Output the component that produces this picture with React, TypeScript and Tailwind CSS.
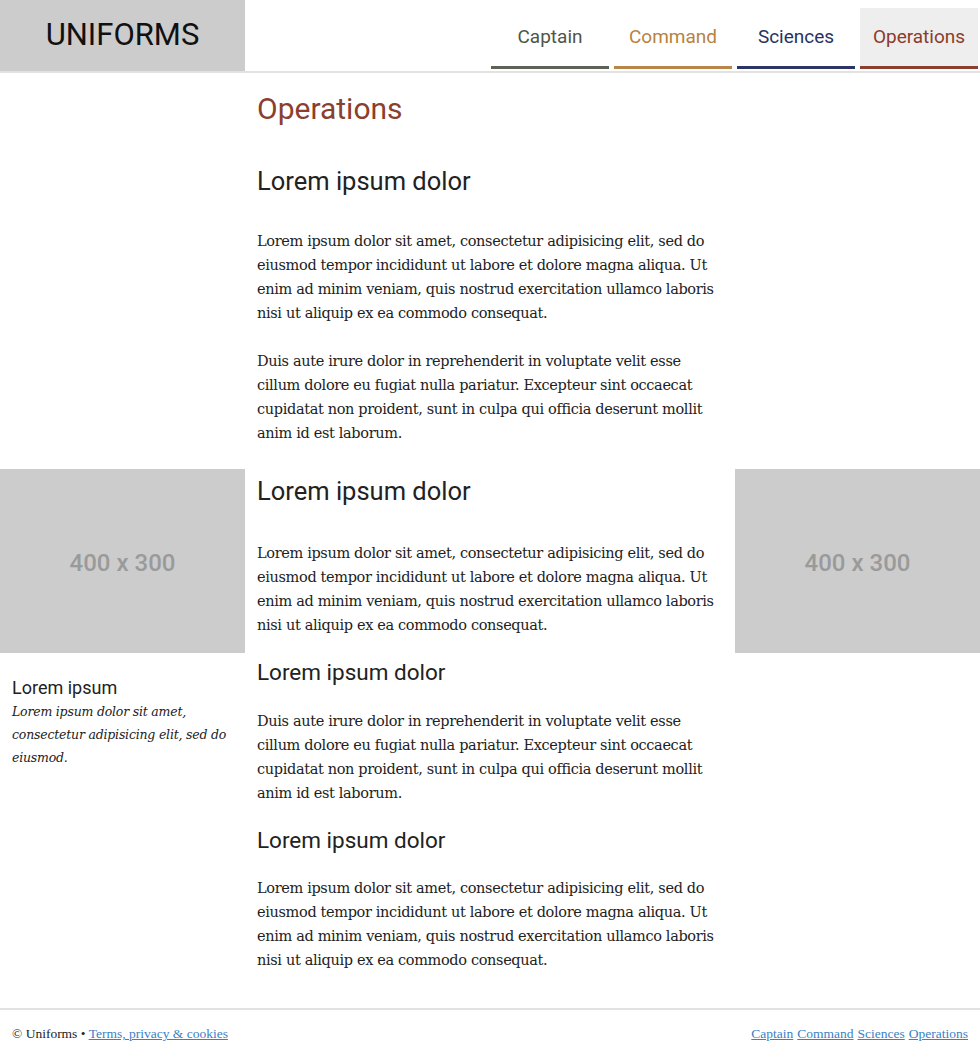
import React from 'react';

const tabs = [
  { name: 'Captain', text: 'text-[#4f5549]', line: 'border-[#5c6357]', active: false },
  { name: 'Command', text: 'text-[#b8823f]', line: 'border-[#b8864a]', active: false },
  { name: 'Sciences', text: 'text-[#283261]', line: 'border-[#2c3566]', active: false },
  { name: 'Operations', text: 'text-[#8b3c2a]', line: 'border-[#8b3f2e]', active: true },
];

const lorem1 =
  'Lorem ipsum dolor sit amet, consectetur adipisicing elit, sed do eiusmod tempor incididunt ut labore et dolore magna aliqua. Ut enim ad minim veniam, quis nostrud exercitation ullamco laboris nisi ut aliquip ex ea commodo consequat.';
const lorem2 =
  'Duis aute irure dolor in reprehenderit in voluptate velit esse cillum dolore eu fugiat nulla pariatur. Excepteur sint occaecat cupidatat non proident, sunt in culpa qui officia deserunt mollit anim id est laborum.';

const sans = "font-['Roboto','Liberation_Sans',sans-serif]";
const serif = "font-['DejaVu_Serif','Liberation_Serif',serif]";

const Placeholder = () => (
  <div className={`h-[184px] bg-[#cccccc] flex items-center justify-center pt-[3px] text-[24px] font-medium text-[#9a9a9a] ${sans}`}>
    400 x 300
  </div>
);

const Para = ({ children }: { children: React.ReactNode }) => (
  <p className={`text-[14.5px] leading-[24px] text-[#222] tracking-[-0.35px] ${serif}`}>{children}</p>
);

export default function App() {
  return (
    <div className="w-[980px] bg-white text-[#222]">
      {/* Header */}
      <header className="flex h-[73px] border-b-2 border-[#e2e2e2]">
        <div className={`w-[245px] bg-[#cccccc] flex items-center justify-center text-[31px] text-[#111] ${sans}`}>
          UNIFORMS
        </div>
        <nav className="flex-1 flex justify-end items-end gap-[5px] pr-[2px] pb-[2px]">
          {tabs.map((t) => (
            <a
              key={t.name}
              href="#"
              className={`w-[118px] h-[61px] flex items-center justify-center border-b-[3px] text-[19px] ${sans} ${t.text} ${t.line} ${
                t.active ? 'bg-[#eeeeee]' : ''
              }`}
            >
              {t.name}
            </a>
          ))}
        </nav>
      </header>

      {/* Row 1 */}
      <div className="grid grid-cols-[245px_490px_245px]">
        <div />
        <div className="px-[12px] pt-[16px] pb-[24px]">
          <h1 className={`text-[30px] leading-[40px] text-[#8b3f2e] ${sans}`}>Operations</h1>
          <h2 className={`mt-[32px] text-[25.5px] leading-[40px] text-[#222] ${sans}`}>Lorem ipsum dolor</h2>
          <div className="mt-[28px] flex flex-col gap-[24px]">
            <Para>{lorem1}</Para>
            <Para>{lorem2}</Para>
          </div>
        </div>
        <div />
      </div>

      {/* Row 2 */}
      <div className="grid grid-cols-[245px_490px_245px]">
        <aside>
          <Placeholder />
          <div className="px-[12px] pt-[23px]">
            <h4 className={`text-[18px] leading-[24px] text-[#222] ${sans}`}>Lorem ipsum</h4>
            <p className={`text-[12.5px] leading-[23px] italic text-[#222] tracking-[-0.2px] ${serif}`}>
              Lorem ipsum dolor sit amet, consectetur adipisicing elit, sed do eiusmod.
            </p>
          </div>
        </aside>
        <div className="px-[12px] pb-[36px]">
          <h2 className={`pt-[2px] text-[25.5px] leading-[40px] text-[#222] ${sans}`}>Lorem ipsum dolor</h2>
          <div className="mt-[30px]">
            <Para>{lorem1}</Para>
          </div>
          <h3 className={`mt-[19px] text-[22.5px] leading-[32px] text-[#222] ${sans}`}>Lorem ipsum dolor</h3>
          <div className="mt-[21px]">
            <Para>{lorem2}</Para>
          </div>
          <h3 className={`mt-[19px] text-[22.5px] leading-[32px] text-[#222] ${sans}`}>Lorem ipsum dolor</h3>
          <div className="mt-[20px]">
            <Para>{lorem1}</Para>
          </div>
        </div>
        <aside>
          <Placeholder />
        </aside>
      </div>

      {/* Footer */}
      <footer className="border-t-2 border-[#e2e2e2] flex justify-between items-center px-[12px] h-[50px] text-[13.5px] font-['Liberation_Serif',serif]">
        <div>
          © Uniforms •{' '}
          <a href="#" className="text-[#3b7fc4] underline">
            Terms, privacy &amp; cookies
          </a>
        </div>
        <div className="flex gap-[4px]">
          {tabs.map((t) => (
            <a key={t.name} href="#" className="text-[#3b7fc4] underline">
              {t.name}
            </a>
          ))}
        </div>
      </footer>
    </div>
  );
}
